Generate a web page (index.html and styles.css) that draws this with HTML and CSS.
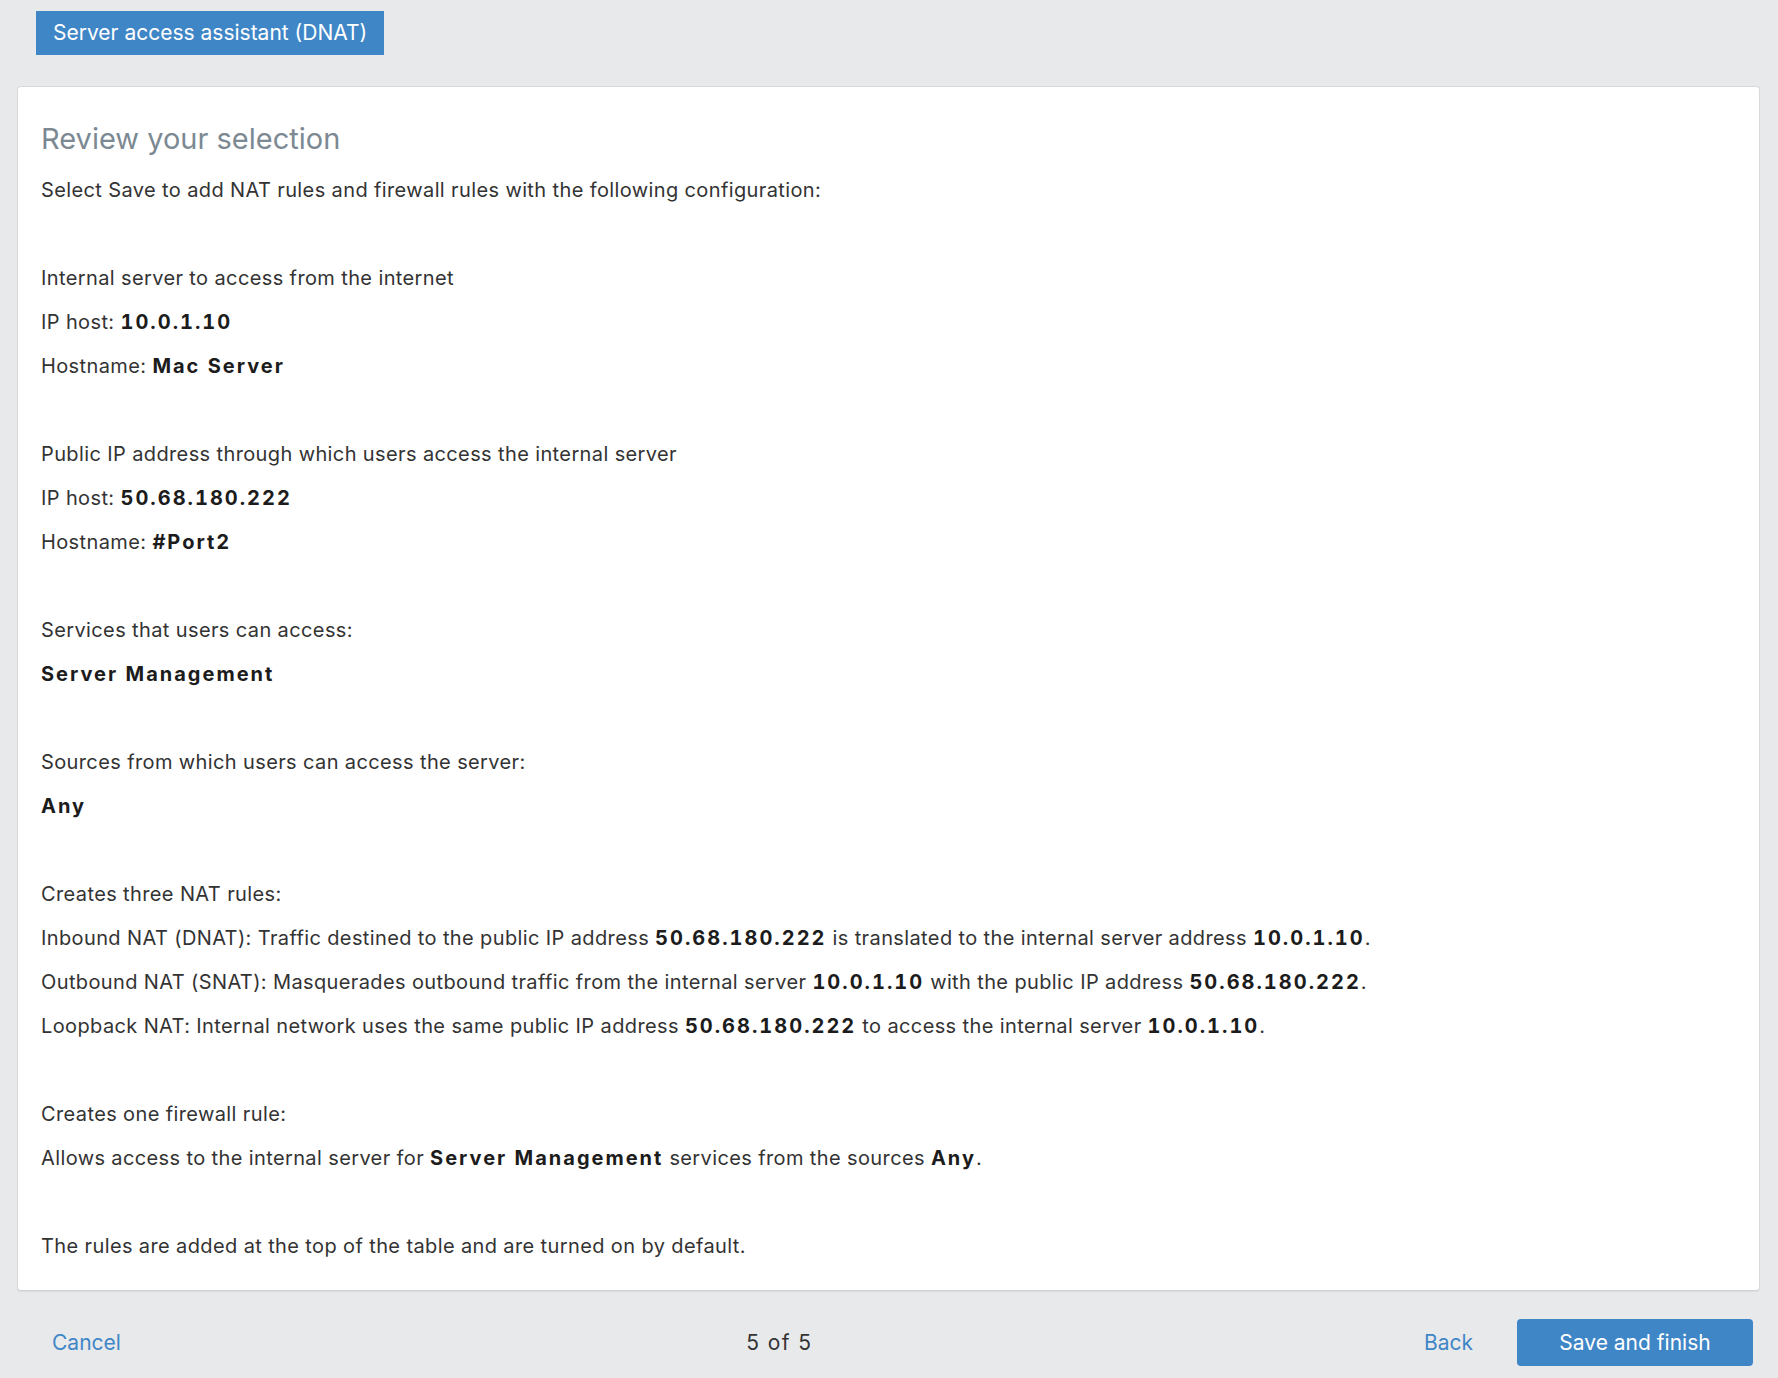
FILE: index.html
```html
<!DOCTYPE html>
<html lang="en">
<head>
<meta charset="utf-8">
<title>Server access assistant (DNAT)</title>
<link rel="stylesheet" href="styles.css">
</head>
<body>
<div class="page">
  <div class="titlebar">
    <div class="title-tab">Server access assistant (DNAT)</div>
  </div>

  <main class="card">
    <h1 class="heading">Review your selection</h1>

    <section class="group">
      <p>Select Save to add NAT rules and firewall rules with the following configuration:</p>
    </section>

    <section class="group">
      <p>Internal server to access from the internet</p>
      <p>IP host: <b>10.0.1.10</b></p>
      <p>Hostname: <b>Mac Server</b></p>
    </section>

    <section class="group">
      <p>Public IP address through which users access the internal server</p>
      <p>IP host: <b>50.68.180.222</b></p>
      <p>Hostname: <b>#Port2</b></p>
    </section>

    <section class="group">
      <p>Services that users can access:</p>
      <p><b>Server Management</b></p>
    </section>

    <section class="group">
      <p>Sources from which users can access the server:</p>
      <p><b>Any</b></p>
    </section>

    <section class="group">
      <p>Creates three NAT rules:</p>
      <p>Inbound NAT (DNAT): Traffic destined to the public IP address <b>50.68.180.222</b> is translated to the internal server address <b>10.0.1.10</b>.</p>
      <p>Outbound NAT (SNAT): Masquerades outbound traffic from the internal server <b>10.0.1.10</b> with the public IP address <b>50.68.180.222</b>.</p>
      <p>Loopback NAT: Internal network uses the same public IP address <b>50.68.180.222</b> to access the internal server <b>10.0.1.10</b>.</p>
    </section>

    <section class="group">
      <p>Creates one firewall rule:</p>
      <p>Allows access to the internal server for <b>Server Management</b> services from the sources <b>Any</b>.</p>
    </section>

    <section class="group">
      <p>The rules are added at the top of the table and are turned on by default.</p>
    </section>
  </main>

  <footer class="footer">
    <a class="link" href="#">Cancel</a>
    <span class="step">5 of 5</span>
    <div class="actions">
      <a class="link" href="#">Back</a>
      <button class="primary" type="button">Save and finish</button>
    </div>
  </footer>
</div>
</body>
</html>
```

FILE: styles.css
```css
* {
  box-sizing: border-box;
}

html, body {
  margin: 0;
  padding: 0;
  background: #e8e9eb;
}

body {
  font-family: Inter, Roboto, "Liberation Sans", Arial, sans-serif;
  color: #333333;
  width: 1778px;
  height: 1378px;
  overflow: hidden;
}

.page {
  display: flex;
  flex-direction: column;
}

.titlebar {
  padding: 11px 0 0 36px;
  display: flex;
}

.title-tab {
  height: 44px;
  line-height: 44px;
  padding: 0 17px;
  background: #3f86c7;
  color: #ffffff;
  font-size: 21px;
}

.card {
  margin: 31px 18px 0 17px;
  height: 1205px;
  background: #ffffff;
  border: 1px solid #d7d9db;
  border-bottom-color: #cfd1d3;
  border-radius: 4px;
  box-shadow: 0 1px 1px rgba(0, 0, 0, 0.06);
  padding: 30px 23px 0 23px;
}

.heading {
  margin: 0 0 7px 0;
  font-size: 29px;
  font-weight: 400;
  line-height: 44px;
  color: #7c8993;
}

.group {
  margin: 0;
}

.group + .group {
  margin-top: 44px;
}

.group p {
  margin: 0;
  font-size: 20px;
  line-height: 44px;
  letter-spacing: 0.38px;
  color: #333333;
  white-space: nowrap;
}

.group b {
  font-weight: 700;
  color: #1c1c1c;
  letter-spacing: 2px;
  font-variant-numeric: tabular-nums;
}

.footer {
  display: flex;
  align-items: center;
  justify-content: space-between;
  padding: 28px 25px 0 52px;
}

.link {
  color: #3f86c7;
  text-decoration: none;
  font-size: 21px;
}

.step {
  margin-left: 14px;
  font-size: 21px;
  color: #333333;
  letter-spacing: 1.4px;
}

.actions {
  display: flex;
  align-items: center;
  gap: 44px;
}

.primary {
  width: 236px;
  height: 47px;
  border: none;
  border-radius: 4px;
  background: #3f86c7;
  color: #ffffff;
  font-family: Inter, Roboto, "Liberation Sans", Arial, sans-serif;
  font-size: 21px;
  padding: 0;
}
```
